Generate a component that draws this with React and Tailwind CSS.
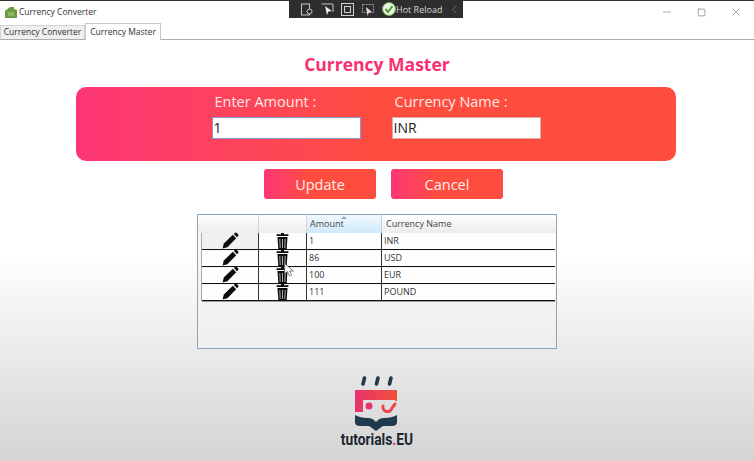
import { Minus, Square, X } from "lucide-react";

const rows = [
  { amount: "1", name: "INR", first: true },
  { amount: "86", name: "USD" },
  { amount: "100", name: "EUR" },
  { amount: "111", name: "POUND" },
];

const PencilIcon = () => (
  <svg width="17" height="17" viewBox="0 0 17 17">
    <path d="M0.6 16.4 L1.8 11.6 L10.8 2.8 L14.2 6.2 L5.4 15.2 Z" fill="#0c0c0c" />
    <path d="M11.8 1.9 L13 0.8 Q13.9 0.2 14.7 0.9 L16.1 2.3 Q16.8 3.1 16.2 3.9 L15.1 5.2 Z" fill="#0c0c0c" />
  </svg>
);

const TrashIcon = () => (
  <svg width="13" height="17" viewBox="0 0 13 17">
    <path d="M5 0 H8 V1.2 H12.4 V3 H0.6 V1.2 H5 Z" fill="#0c0c0c" />
    <path d="M1.5 4 H11.5 L10.6 17 H2.4 Z" fill="#0c0c0c" />
    <path d="M3.8 6 L4.2 15 M6.5 6 V15 M9.2 6 L8.8 15" stroke="#d8d8d8" strokeWidth="0.8" />
  </svg>
);

const Logo = () => (
  <svg width="44" height="56" viewBox="0 0 44 56">
    <defs>
      <linearGradient id="logoGrad" x1="0" y1="0" x2="1" y2="0">
        <stop offset="0" stopColor="#e8336d" />
        <stop offset="1" stopColor="#f0503a" />
      </linearGradient>
    </defs>
    <path d="M10.5 3 L9 9 M24 3 L22.5 9 M37 3 L35.5 9" stroke="#1f3a4d" strokeWidth="3.6" strokeLinecap="round" />
    <path d="M1 15 H43 V26 H41 V25 H9 V37 H1 Z" fill="url(#logoGrad)" />
    <circle cx="15" cy="31" r="3.5" fill="#e8336d" />
    <path d="M29 31 A4.5 4.5 0 0 0 38 33 L41 29" stroke="#ee4450" strokeWidth="3" fill="none" strokeLinecap="round" />
    <path d="M1 40 Q6 43 14 43 Q19 43 22 47 Q25 43 30 43 Q38 43 43 40 V47 Q43 51 38 51 H29 L22 56 L15 51 H6 Q1 51 1 47 Z" fill="#1f3a4d" />
  </svg>
);

const DevToolbar = () => (
  <div className="absolute left-[289px] top-0 w-[174px] h-[18px] bg-[#2e2e31] flex items-center pl-[12px] text-[#d8d8d8]">
    <svg className="shrink-0" width="12" height="13" viewBox="0 0 12 13" fill="none" stroke="#c8c8c8">
      <rect x="0.5" y="1" width="8" height="11" />
      <circle cx="8.5" cy="8.5" r="2.5" fill="#2e2e31" />
    </svg>
    <svg className="ml-[8px] shrink-0" width="13" height="13" viewBox="0 0 13 13" fill="none">
      <path d="M0.5 1 H12 V9" stroke="#c8c8c8" />
      <path d="M4 3 L11 8 L7.5 8.5 L6 12 Z" fill="#eeeeee" />
    </svg>
    <svg className="ml-[7px] shrink-0" width="13" height="13" viewBox="0 0 13 13" fill="none" stroke="#d0d0d0">
      <rect x="0.5" y="0.5" width="12" height="12" />
      <rect x="3.5" y="3.5" width="6" height="6" />
    </svg>
    <svg className="ml-[7px] shrink-0" width="14" height="13" viewBox="0 0 14 13" fill="none">
      <rect x="1.5" y="1.5" width="11" height="8" stroke="#9a9a9a" strokeDasharray="2 1" />
      <path d="M5 4 L11 9 L8 9.5 L6.5 13 Z" fill="#dddddd" />
    </svg>
    <svg className="ml-[7px] shrink-0" width="14" height="14" viewBox="0 0 14 14" fill="none">
      <circle cx="7" cy="7" r="6.5" fill="#e8f3e0" stroke="#6aa84f" />
      <path d="M3.5 7 L6 10 L10.5 4" stroke="#4e9a36" strokeWidth="2" />
    </svg>
    <span className="ml-0 text-[9px] whitespace-nowrap leading-none text-[#d4d4d4]">Hot Reload</span>
    <svg className="ml-[10px] shrink-0" width="5" height="9" viewBox="0 0 5 9" fill="none" stroke="#6e6e70">
      <path d="M4.5 0.5 L0.5 4.5 L4.5 8.5" />
    </svg>
  </div>
);

const GradientButton = ({ label }) => (
  <button className="w-[112px] h-[30px] pt-[2px] rounded-[3px] bg-gradient-to-r from-[#fd3575] to-[#fe4c3f] to-40% text-[#ffeeea] text-[14.5px] leading-none">
    {label}
  </button>
);

const Field = ({ label, value, border }) => (
  <div className="flex flex-col w-[149px]">
    <label className="h-[22px] pl-[3px] text-[#ffe9e4] text-[14.5px] leading-[22px] whitespace-nowrap">{label}</label>
    <div className={`mt-[4px] w-[149px] h-[22px] bg-white border ${border} pl-[1px] text-[14px] leading-[20px] text-[#1c1c1c]`}>
      {value}
    </div>
  </div>
);

const Row = ({ amount, name, first }) => (
  <div className="flex h-[17px] border-b border-[#111] shadow-[0_1px_0_#9a9a9a] bg-white/90 text-[9px] leading-[15px] text-[#333]">
    <div className={`w-[57px] flex justify-center items-start border-r border-[#333] ${first ? "bg-[#f0f0f0]" : ""}`}>
      <div className="-mt-px"><PencilIcon /></div>
    </div>
    <div className="w-[48px] flex justify-center border-r border-[#333]">
      <TrashIcon />
    </div>
    <div className="w-[75px] pl-[2px] border-r border-[#333]">{amount}</div>
    <div className="flex-1 pl-[2px]">{name}</div>
  </div>
);

const App = () => {
  return (
    <div className="relative w-[754px] h-[461px] overflow-hidden flex flex-col bg-gradient-to-b from-white from-55% to-[#d4d4d4] font-['Open_Sans',sans-serif]">
      <div className="h-px bg-[#333] shrink-0" />
      {/* title bar */}
      <div className="flex items-center h-[22px] shrink-0 pl-[5px] pr-[12px] text-[#333]">
        <svg width="12" height="11" viewBox="0 0 12 11">
          <path d="M0 4 L5 0 H9 V2 L12 3 V11 H0 Z" fill="#6f9a45" />
          <rect x="3" y="5" width="6" height="4" fill="#8cb860" />
        </svg>
        <span className="ml-[2px] mt-px text-[8.5px] leading-none whitespace-nowrap">Currency Converter</span>
        <div className="ml-auto flex items-center gap-[24px] text-[#555]">
          <Minus size={12} strokeWidth={1} />
          <Square size={9} strokeWidth={1.4} />
          <X size={12} strokeWidth={1} />
        </div>
      </div>
      {/* tabs */}
      <div className="flex items-end h-[17px] shrink-0 border-b border-[#acacac] text-[8.5px] leading-none text-[#333]">
        <div className="h-[14px] w-[85px] flex items-center justify-center whitespace-nowrap bg-[#efefef] border border-b-0 border-[#d4d4d4]">
          Currency Converter
        </div>
        <div className="h-[17px] w-[76px] -mb-px flex items-center justify-center whitespace-nowrap bg-white border border-b-0 border-[#c8c8c8]">
          Currency Master
        </div>
      </div>

      <h1 className="mt-[11px] h-[26px] text-center text-[17.5px] leading-[26px] font-bold text-[#f9306f]">
        Currency Master
      </h1>

      {/* entry panel */}
      <div className="mt-[10px] ml-[76px] w-[600px] h-[74px] rounded-[10px] bg-gradient-to-r from-[#fd3575] to-[#fe4c3f] to-50% flex justify-center gap-[31px] pt-[4px] shrink-0">
        <Field label="Enter Amount :" value="1" border="border-[#8a9bd0]" />
        <Field label="Currency Name :" value="INR" border="border-[#d9a9a9]" />
      </div>

      <div className="mt-[8px] ml-[264px] flex gap-[15px] shrink-0">
        <GradientButton label="Update" />
        <GradientButton label="Cancel" />
      </div>

      {/* data grid */}
      <div className="mt-[15px] ml-[197px] w-[360px] h-[135px] shrink-0 border border-[#8ca3bd] bg-[#f2f2f2]/60 flex flex-col">
        <div className="flex h-[18px] pl-[3px] shrink-0 bg-gradient-to-b from-white to-[#ececec] text-[9px] leading-[18px] text-[#444]">
          <div className="w-[58px] border-r border-[#d5d5d5]" />
          <div className="w-[48px] border-r border-[#d5d5d5]" />
          <div className="relative w-[75px] pl-[3px] border-r border-[#c0d0e0] bg-gradient-to-b from-[#f2f9fe] to-[#cfe8fa]">
            Amount
            <div className="absolute left-[34px] top-px w-0 h-0 border-x-[3px] border-x-transparent border-b-[3px] border-b-[#9aa7b5]" />
          </div>
          <div className="flex-1 pl-[4px]">Currency Name</div>
        </div>
        <div className="ml-[3px] mr-px border-l border-[#aaa]">
          {rows.map((row) => (
            <Row key={row.name} {...row} />
          ))}
        </div>
      </div>

      {/* logo */}
      <div className="mt-[26px] flex flex-col items-center shrink-0">
        <div className="-ml-[2px] h-[56px]"><Logo /></div>
        <span className="font-['Roboto',sans-serif] font-bold text-[16px] leading-[18px] text-[#1c2730] scale-x-[0.86]">
          tutorials<span className="text-[#e8336d]">.</span>EU
        </span>
      </div>

      <DevToolbar />
      {/* mouse cursor over the grid */}
      <svg className="absolute left-[284px] top-[263px]" width="10" height="14" viewBox="0 0 9 13">
        <path d="M0.5 0.5 L0.5 10 L3 8 L5 12 L7 11 L5 7.5 L8.5 7.5 Z" fill="#fff" stroke="#555" strokeWidth="0.7" />
      </svg>
    </div>
  );
};

export default App;
